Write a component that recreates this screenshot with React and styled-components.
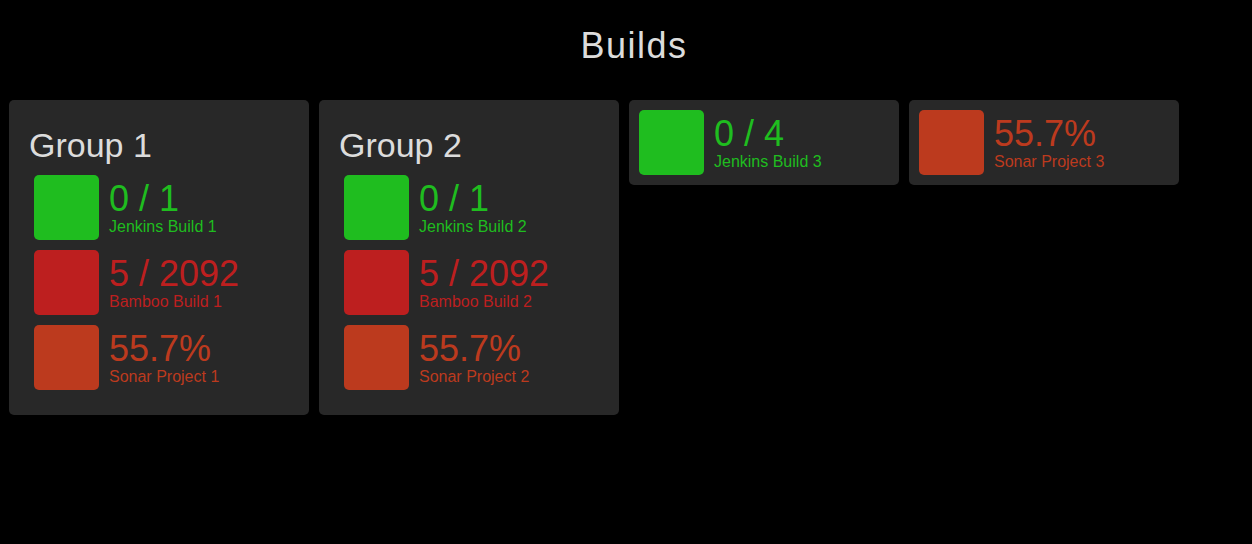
import React from "react";
import styled, { createGlobalStyle } from "styled-components";

const GlobalStyle = createGlobalStyle`
  html, body {
    margin: 0;
    padding: 0;
    background: #000;
  }
  body {
    font-family: "Liberation Sans", Arial, Helvetica, sans-serif;
    color: #ddd;
  }
`;

const STATUS = {
  success: "#1fbd1f",
  failure: "#bd1f1f",
  warning: "#bc3a1e",
};

const Page = styled.div`
  display: flex;
  flex-direction: column;
`;

const Title = styled.h1`
  margin: 0;
  padding: 25px 0 0 16px;
  height: 100px;
  box-sizing: border-box;
  text-align: center;
  font-size: 36px;
  line-height: 41px;
  letter-spacing: 1.5px;
  font-weight: normal;
  color: #dcdcdc;
`;

const Board = styled.div`
  display: flex;
  flex-wrap: wrap;
  align-items: flex-start;
  gap: 10px;
  padding: 0 9px;
`;

const Card = styled.div`
  box-sizing: border-box;
  width: ${(p) => p.$width}px;
  padding: ${(p) => p.$padding}px;
  background: #282828;
  border-radius: 5px;
`;

const GroupTitle = styled.h2`
  margin: 0;
  font-size: 34px;
  line-height: 50px;
  font-weight: normal;
  color: #dcdcdc;
`;

const Item = styled.div`
  display: flex;
  align-items: flex-start;
  gap: 10px;
  padding: 5px;
`;

const Square = styled.div`
  flex: none;
  width: 65px;
  height: 65px;
  border-radius: 5px;
  background: ${(p) => STATUS[p.$status]};
`;

const Info = styled.div`
  display: flex;
  flex-direction: column;
  padding-top: 6px;
  color: ${(p) => STATUS[p.$status]};
  white-space: nowrap;
`;

const Value = styled.div`
  font-size: 36px;
  line-height: 35px;
`;

const Label = styled.div`
  margin-top: 3px;
  font-size: 16px;
  line-height: 16px;
`;

const groups = [
  {
    name: "Group 1",
    items: [
      { value: "0 / 1", label: "Jenkins Build 1", status: "success" },
      { value: "5 / 2092", label: "Bamboo Build 1", status: "failure" },
      { value: "55.7%", label: "Sonar Project 1", status: "warning" },
    ],
  },
  {
    name: "Group 2",
    items: [
      { value: "0 / 1", label: "Jenkins Build 2", status: "success" },
      { value: "5 / 2092", label: "Bamboo Build 2", status: "failure" },
      { value: "55.7%", label: "Sonar Project 2", status: "warning" },
    ],
  },
];

const singles = [
  { value: "0 / 4", label: "Jenkins Build 3", status: "success" },
  { value: "55.7%", label: "Sonar Project 3", status: "warning" },
];

function BuildItem({ value, label, status }) {
  return (
    <Item>
      <Square $status={status} />
      <Info $status={status}>
        <Value>{value}</Value>
        <Label>{label}</Label>
      </Info>
    </Item>
  );
}

export default function App() {
  return (
    <Page>
      <GlobalStyle />
      <Title>Builds</Title>
      <Board>
        {groups.map((g) => (
          <Card key={g.name} $width={300} $padding={20}>
            <GroupTitle>{g.name}</GroupTitle>
            {g.items.map((it) => (
              <BuildItem key={it.label} {...it} />
            ))}
          </Card>
        ))}
        {singles.map((it) => (
          <Card key={it.label} $width={270} $padding={5}>
            <BuildItem {...it} />
          </Card>
        ))}
      </Board>
    </Page>
  );
}
